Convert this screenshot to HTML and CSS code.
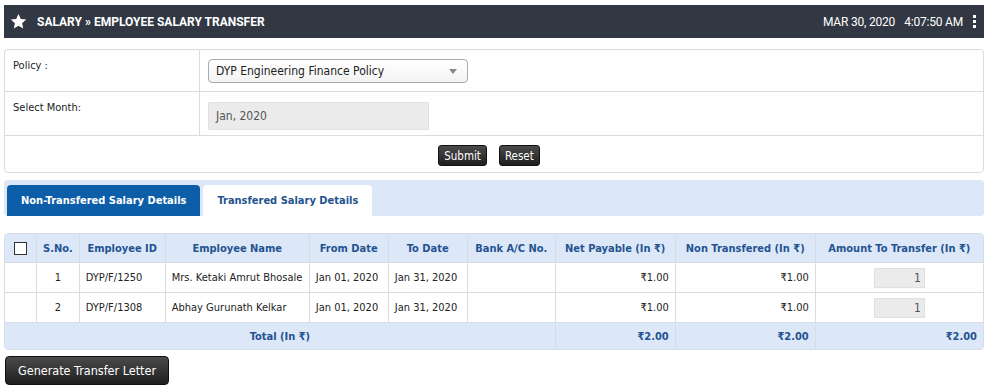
FILE: index.html
```html
<!DOCTYPE html>
<html lang="en">
<head>
    <meta charset="UTF-8">
    <title>Employee Salary Transfer</title>
    <link rel="stylesheet" href="styles.css">
</head>
<body>
    <div class="topbar">
        <div class="title">
            <svg class="star" width="17" height="17" viewBox="0 0 24 24"><path d="M12 1.5l3.2 7 7.6.8-5.7 5.1 1.6 7.5L12 18l-6.7 3.9 1.6-7.5L1.2 9.3l7.6-.8z" fill="#fff"/></svg>
            <span>SALARY &raquo; EMPLOYEE SALARY TRANSFER</span>
        </div>
        <div class="clock">
            <span>MAR 30, 2020</span>
            <span>4:07:50 AM</span>
            <span class="dots"><i></i><i></i><i></i></span>
        </div>
    </div>

    <div class="form-box">
        <div class="form-row">
            <div class="form-label">Policy :</div>
            <div class="form-field">
                <div class="select">DYP Engineering Finance Policy <span class="caret"></span></div>
            </div>
        </div>
        <div class="form-row">
            <div class="form-label">Select Month:</div>
            <div class="form-field">
                <div class="month">Jan, 2020</div>
            </div>
        </div>
        <div class="form-actions">
            <button class="btn">Submit</button>
            <button class="btn">Reset</button>
        </div>
    </div>

    <div class="tabs">
        <div class="tab active">Non-Transfered Salary Details</div>
        <div class="tab">Transfered Salary Details</div>
    </div>

    <table class="grid">
        <thead>
            <tr>
                <th class="c-chk"><span class="chk"></span></th>
                <th class="c-sno">S.No.</th>
                <th class="c-id">Employee ID</th>
                <th class="c-name">Employee Name</th>
                <th class="c-date">From Date</th>
                <th class="c-date">To Date</th>
                <th class="c-bank">Bank A/C No.</th>
                <th class="c-net">Net Payable (In &#8377;)</th>
                <th class="c-non">Non Transfered (In &#8377;)</th>
                <th class="c-amt">Amount To Transfer (In &#8377;)</th>
            </tr>
        </thead>
        <tbody>
            <tr>
                <td></td>
                <td class="center">1</td>
                <td>DYP/F/1250</td>
                <td>Mrs. Ketaki Amrut Bhosale</td>
                <td>Jan 01, 2020</td>
                <td>Jan 31, 2020</td>
                <td></td>
                <td class="right">&#8377;1.00</td>
                <td class="right">&#8377;1.00</td>
                <td class="center"><span class="amt">1</span></td>
            </tr>
            <tr>
                <td></td>
                <td class="center">2</td>
                <td>DYP/F/1308</td>
                <td>Abhay Gurunath Kelkar</td>
                <td>Jan 01, 2020</td>
                <td>Jan 31, 2020</td>
                <td></td>
                <td class="right">&#8377;1.00</td>
                <td class="right">&#8377;1.00</td>
                <td class="center"><span class="amt">1</span></td>
            </tr>
        </tbody>
        <tfoot>
            <tr>
                <td colspan="7" class="center">Total (In &#8377;)</td>
                <td class="right">&#8377;2.00</td>
                <td class="right">&#8377;2.00</td>
                <td class="right">&#8377;2.00</td>
            </tr>
        </tfoot>
    </table>

    <button class="btn big">Generate Transfer Letter</button>
</body>
</html>
```

FILE: styles.css
```css
:root {
    --bar-bg: #313843;
    --line: #dcdcdc;
    --light-blue: #dce8f8;
    --dark-blue: #0d5ea8;
    --head-text: #245390;
    --text: #222;
}

body {
    margin: 0;
    padding: 5px 8px 0 4px;
    font-family: "DejaVu Sans Condensed", "DejaVu Sans", sans-serif;
    font-size: 11px;
    color: var(--text);
    background: #fff;
}

.topbar {
    height: 33px;
    background: var(--bar-bg);
    color: #fff;
    display: flex;
    align-items: center;
    justify-content: space-between;
    padding: 0 8px 0 6px;
    font-family: Roboto, "Liberation Sans", sans-serif;
}

.title {
    display: flex;
    align-items: center;
    gap: 10px;
    font-weight: bold;
    font-size: 12px;
}

.clock {
    display: flex;
    align-items: center;
    gap: 9px;
    font-size: 12px;
    letter-spacing: -0.2px;
}

.dots {
    display: flex;
    flex-direction: column;
    gap: 2px;
    margin-left: 1px;
}

.dots i {
    width: 3px;
    height: 3px;
    background: #fff;
}

.form-box {
    margin-top: 11px;
    border: 1px solid var(--line);
    border-radius: 4px;
}

.form-row {
    display: flex;
    border-bottom: 1px solid var(--line);
}

.form-row:first-child { height: 41px; }
.form-row:nth-child(2) { height: 43px; }

.form-label {
    width: 186px;
    padding: 9px 0 0 8px;
    border-right: 1px solid var(--line);
}

.form-field {
    padding: 9px 0 0 8px;
}

.select {
    width: 251px;
    height: 22px;
    line-height: 22px;
    padding-left: 7px;
    border: 1px solid #aaa;
    border-radius: 4px;
    background: linear-gradient(#fff, #f3f3f3);
    font-size: 12px;
    position: relative;
}

.caret {
    position: absolute;
    right: 10px;
    top: 9px;
    border: 4px solid transparent;
    border-top: 5px solid #888;
    border-bottom: 0;
}

.month {
    margin-top: 1px;
    width: 212px;
    height: 26px;
    line-height: 26px;
    padding-left: 7px;
    background: #ebebeb;
    border: 1px solid #e0e0e0;
    border-radius: 2px;
    color: #555;
    font-size: 12px;
}

.form-actions {
    display: flex;
    justify-content: center;
    gap: 12px;
    padding: 9px 10px 6px 0;
}

.btn {
    font-family: "DejaVu Sans Condensed", "DejaVu Sans", sans-serif;
    font-size: 11.5px;
    color: #fff;
    background: linear-gradient(#4a4a4a, #1f1f1f);
    border: 1px solid #111;
    border-radius: 3px;
    padding: 0 5px;
    height: 21px;
}

.tabs {
    display: flex;
    gap: 3px;
    margin-top: 7px;
    height: 36px;
    padding: 5px 0 0 3px;
    box-sizing: border-box;
    background: var(--light-blue);
    border-radius: 4px;
    align-items: flex-end;
}

.tab {
    height: 31px;
    line-height: 31px;
    padding: 0 14px;
    background: #fff;
    color: var(--head-text);
    font-weight: bold;
    border-radius: 4px 4px 0 0;
}

.tab.active {
    background: var(--dark-blue);
    color: #fff;
}

.grid {
    margin-top: 17px;
    width: 980px;
    border-collapse: separate;
    border-spacing: 0;
    border: 1px solid #d4dde8;
    border-radius: 4px;
}

.grid th, .grid td {
    border-right: 1px solid #d9dde3;
    border-bottom: 1px solid #d9dde3;
    padding: 0 6px;
    white-space: nowrap;
}

.grid th:last-child, .grid td:last-child { border-right: none; }
.grid tfoot td { border-bottom: none; }

.grid th {
    height: 28px;
    background: var(--light-blue);
    color: var(--head-text);
    font-weight: bold;
}

.grid tbody td { height: 29px; }

.grid tfoot td {
    height: 26px;
    background: var(--light-blue);
    color: var(--head-text);
    font-weight: bold;
}

.c-chk { width: 19px; }
.c-sno { width: 27px; }
.c-id { width: 73px; }
.c-name { width: 131px; }
.c-date { width: 66px; }
.c-bank { width: 75px; }
.c-net { width: 107px; }
.c-non { width: 127px; }

.center { text-align: center; }
.right { text-align: right; }

.chk {
    display: inline-block;
    width: 11px;
    height: 11px;
    border: 1px solid #333;
    background: #fff;
    vertical-align: middle;
}

.amt {
    display: inline-block;
    width: 46px;
    height: 18px;
    line-height: 18px;
    padding-right: 3px;
    text-align: right;
    background: #ebebeb;
    border: 1px solid #e0e0e0;
    color: #555;
    font-size: 12px;
}

.btn.big {
    margin-top: 6px;
    margin-left: 1px;
    height: 29px;
    padding: 0 12px;
    font-size: 12.5px;
    border-radius: 4px;
}
```
